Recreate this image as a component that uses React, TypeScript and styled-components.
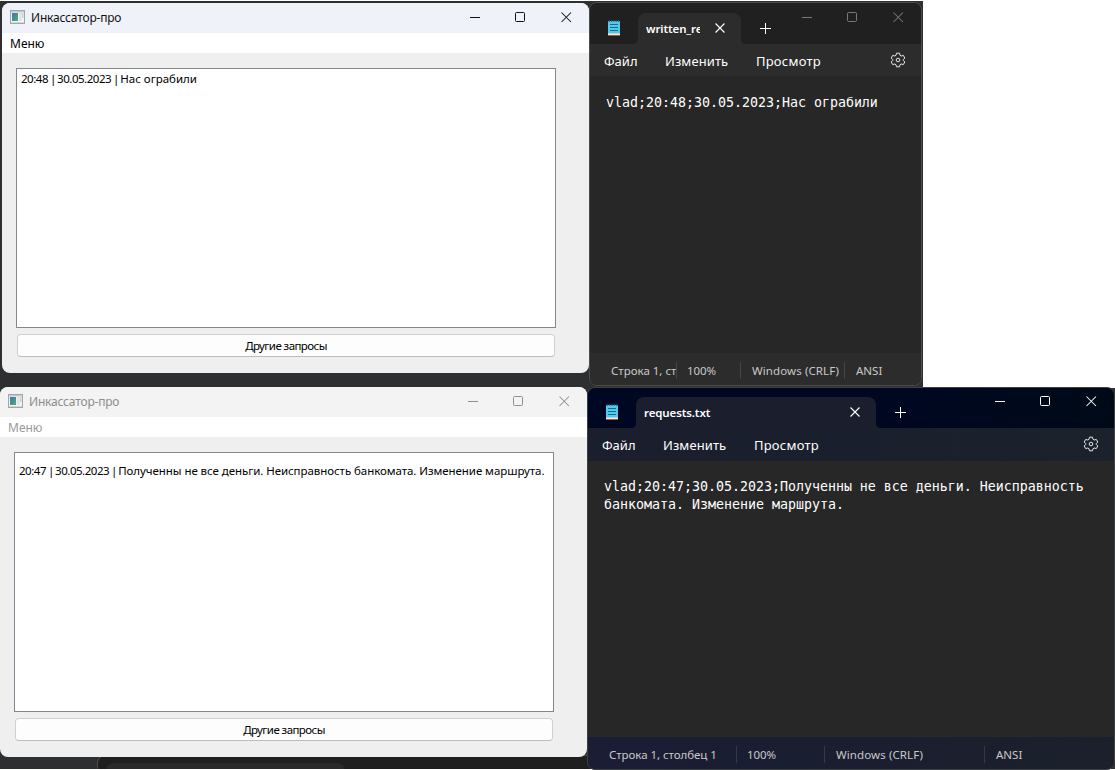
import React from "react";
import styled, { createGlobalStyle, css } from "styled-components";

const Global = createGlobalStyle`
  *, *::before, *::after { box-sizing: border-box; }
  html, body { margin: 0; background: #fff; }
  body { font-family: "Noto Sans", "Open Sans", sans-serif; font-size: 12px; overflow: hidden; }
`;

const Screen = styled.main`
  position: relative;
  width: 1115px;
  height: 770px;
  overflow: hidden;
  background: #fff;
`;

const Backdrop = styled.div<{ $x: number; $y: number; $w: number; $h: number }>`
  position: absolute;
  left: ${(p) => p.$x}px;
  top: ${(p) => p.$y}px;
  width: ${(p) => p.$w}px;
  height: ${(p) => p.$h}px;
  background: #2d2f30;
`;

const Label = styled.span<{ $ls?: number; $size?: number }>`
  display: inline-block;
  white-space: pre;
  letter-spacing: ${(p) => p.$ls ?? 0}px;
  ${(p) => p.$size && css`font-size: ${p.$size}px;`}
`;

/* ---------- request list window ---------- */

const FormWindow = styled.section<{ $x: number; $y: number }>`
  position: absolute;
  left: ${(p) => p.$x}px;
  top: ${(p) => p.$y}px;
  width: 587px;
  height: 370px;
  display: flex;
  flex-direction: column;
  border-radius: 8px;
  overflow: hidden;
  background: #efefef;
  color: #000;
`;

const FormTitle = styled.header<{ $active: boolean }>`
  flex: 0 0 30px;
  display: flex;
  align-items: center;
  padding: 0 17px 2px 8px;
  background: ${(p) => (p.$active ? "#f0f2f9" : "#f3f3f3")};
  color: ${(p) => (p.$active ? "#111" : "#8c8c8c")};
  svg { display: block; }
`;

const TitleText = styled.div`
  flex: 1;
  padding: 1px 0 0 6px;
  line-height: 16px;
`;

const Controls = styled.div`
  display: flex;
  gap: 35px;
`;

const MenuBar = styled.nav<{ $active: boolean }>`
  flex: 0 0 20px;
  min-height: 0;
  padding-left: 8px;
  line-height: 21px;
  background: #fff;
  color: ${(p) => (p.$active ? "#000" : "#9a9a9a")};
`;

const FormBody = styled.div`
  flex: 1;
  display: flex;
  flex-direction: column;
  padding: 15px 33px 16px 14px;
`;

const ListBox = styled.div<{ $pad: number }>`
  height: 260px;
  border: 1px solid #828790;
  background: #fff;
  padding: ${(p) => p.$pad}px 0 0 4px;
  font-size: 11.5px;
  line-height: 16px;
  overflow: hidden;
`;

const Entry = styled.div`
  display: flex;
  white-space: pre;
`;

const PushButton = styled.button`
  height: 23px;
  margin: 6px 1px 0;
  padding: 0;
  border: 1px solid #d0d0d0;
  border-bottom-color: #bcbcbc;
  border-radius: 4px;
  background: #fdfdfd;
  color: #000;
  font: inherit;
  line-height: 21px;
  text-align: center;
`;

const FormIcon = () => (
  <svg width="15" height="14" viewBox="0 0 15 14">
    <defs>
      <linearGradient id="pane" x1="0" y1="0" x2="1" y2="1">
        <stop offset="0" stopColor="#3f74a8" />
        <stop offset="1" stopColor="#4fae7c" />
      </linearGradient>
    </defs>
    <rect x="0.5" y="0.5" width="14" height="13" fill="#f2f3f4" stroke="#a2a6aa" />
    <rect x="1" y="1" width="13" height="1.5" fill="#c5c9cc" />
    <rect x="2" y="3" width="6" height="8" fill="url(#pane)" />
    <rect x="9" y="3" width="2.5" height="8" fill="#dfe3e5" />
    <rect x="12" y="3" width="1.5" height="5" fill="#b9dcc9" />
    <rect x="1" y="12" width="13" height="1" fill="#d5d7d9" />
  </svg>
);

const WindowControls = ({ color }: { color: string }) => (
  <Controls>
    <svg width="11" height="11" viewBox="0 0 11 11">
      <path d="M1 5.5H11" stroke={color} />
    </svg>
    <svg width="11" height="11" viewBox="0 0 11 11">
      <rect x="0.5" y="0.5" width="9" height="9" rx="1" fill="none" stroke={color} />
    </svg>
    <svg width="11" height="11" viewBox="0 0 11 11">
      <path d="M0.5 0.5L10 10M10 0.5L0.5 10" stroke={color} strokeWidth="1.05" />
    </svg>
  </Controls>
);

type FormProps = { x: number; y: number; active: boolean; pad: number; time: string; date: string; ls: number; text: string };

const RequestForm = ({ x, y, active, pad, time, date, ls, text }: FormProps) => (
  <FormWindow $x={x} $y={y}>
    <FormTitle $active={active}>
      <FormIcon />
      <TitleText><Label $ls={-0.19}>Инкассатор-про</Label></TitleText>
      <WindowControls color={active ? "#111" : "#8f8f8f"} />
    </FormTitle>
    <MenuBar $active={active}><Label>Меню</Label></MenuBar>
    <FormBody>
      <ListBox $pad={pad}>
        <Entry>
          <Label $ls={-0.47}>{time}</Label>
          <Label $ls={-1.1}>{" | "}</Label>
          <Label $ls={-0.47}>{date}</Label>
          <Label $ls={-1.1}>{" | "}</Label>
          <Label $ls={ls}>{text}</Label>
        </Entry>
      </ListBox>
      <PushButton><Label $size={11.5} $ls={-0.57}>Другие запросы</Label></PushButton>
    </FormBody>
  </FormWindow>
);

/* ---------- notepad window ---------- */

type Palette = { strip: string; bar: string; status: string; border: string; controls: string };

const grey: Palette = { strip: "#202020", bar: "#2c2c2c", status: "#2c2c2c", border: "#4b4d4c", controls: "#777" };
const navy: Palette = {
  strip: "linear-gradient(90deg, #000722, #000721 60%, #000a17)",
  bar: "linear-gradient(90deg, #1a1e2d, #1a1f2d 50%, #1b222b)",
  status: "linear-gradient(90deg, #1a1d34, #1a1e30 50%, #1b202b)",
  border: "#3d4043",
  controls: "#fff",
};

const PadWindow = styled.section<{ $x: number; $y: number; $w: number; $h: number; $c: string }>`
  position: absolute;
  left: ${(p) => p.$x}px;
  top: ${(p) => p.$y}px;
  width: ${(p) => p.$w}px;
  height: ${(p) => p.$h}px;
  display: flex;
  flex-direction: column;
  border: 1px solid ${(p) => p.$c};
  border-radius: 8px;
  overflow: hidden;
  background: #272727;
  color: #fff;
`;

const TabStrip = styled.header<{ $bg: string; $h: number }>`
  flex: 0 0 ${(p) => p.$h}px;
  display: flex;
  padding-left: 18px;
  background: ${(p) => p.$bg};
  svg { display: block; }
`;

const AppIcon = styled.div`
  width: 30px;
  align-self: flex-end;
  padding-bottom: 7px;
`;

const Tab = styled.div<{ $w: number; $bg: string }>`
  position: relative;
  width: ${(p) => p.$w}px;
  height: 31px;
  align-self: flex-end;
  padding: 0 16px 0 8px;
  display: flex;
  align-items: center;
  border-radius: 8px 8px 0 0;
  background: ${(p) => p.$bg};
  font-weight: 600;
  font-size: 11.5px;
  svg { margin-bottom: 1px; }

  &::before, &::after {
    content: "";
    position: absolute;
    bottom: 0;
    width: 4px;
    height: 4px;
  }
  &::before {
    right: 100%;
    background: radial-gradient(circle at 0 0, transparent 3.5px, ${(p) => p.$bg} 4px);
  }
  &::after {
    left: 100%;
    background: radial-gradient(circle at 100% 0, transparent 3.5px, ${(p) => p.$bg} 4px);
  }
`;

const TabName = styled.div<{ $w: number }>`
  width: ${(p) => p.$w}px;
  overflow: hidden;
  line-height: 18px;
  margin-right: auto;
  height: 18px;
`;

const NewTab = styled.div`
  align-self: flex-end;
  padding: 0 0 10px 19px;
  flex: 1;
`;

const StripControls = styled.div<{ $top: number }>`
  padding: ${(p) => p.$top}px 17px 0 0;
`;

const PadMenu = styled.nav<{ $h: number; $bg: string }>`
  flex: 0 0 ${(p) => p.$h}px;
  min-height: 0;
  display: flex;
  align-items: flex-start;
  padding: 0 15px 0 14px;
  background: ${(p) => p.$bg};
  font-size: 13px;
  line-height: 35px;
  svg { display: block; margin: 8px 0 0 auto; }
`;

const MenuItem = styled.span<{ $w: number }>`
  width: ${(p) => p.$w}px;
  height: 32px;
`;

const TextArea = styled.div<{ $top: number }>`
  flex: 1;
  padding: ${(p) => p.$top}px 0 0 16px;
  font-family: "DejaVu Sans Mono", monospace;
  font-size: 13.29px;
  line-height: 18px;
  white-space: pre;
`;

const StatusBar = styled.footer<{ $bg: string }>`
  flex: 0 0 32px;
  display: flex;
  align-items: center;
  padding: 2px 0 0 21px;
  background: ${(p) => p.$bg};
  color: #c9c9c9;
  font-size: 11.5px;
  line-height: 18px;
`;

const StatusCell = styled.div<{ $w: number; $gap: number }>`
  width: ${(p) => p.$w}px;
  height: 17px;
  line-height: 18px;
  overflow: hidden;
  padding-left: ${(p) => p.$gap}px;
  & + & { border-left: 1px solid rgba(255, 255, 255, 0.12); }
`;

const NotepadIcon = () => (
  <svg width="13" height="17" viewBox="0 0 13 17">
    <rect x="0" y="1" width="12" height="14" rx="0.8" fill="#55c8ea" />
    <path d="M0 13.5H12V15H0Z" fill="#e9eef0" />
    <path d="M0 15H12V15.3Q12 16 11.2 16H0.8Q0 16 0 15.3Z" fill="#b4571c" />
    <path d="M1.5 0.3V2M3.7 0.3V2M6 0.3V2M8.3 0.3V2M10.5 0.3V2" stroke="#176f8e" strokeWidth="1.1" />
    <path d="M2 4.5H10M2 7.5H10M2 10.5H10" stroke="#12708f" strokeWidth="1" />
  </svg>
);

const Gear = () => (
  <svg width="16" height="16" viewBox="0 0 16 16" fill="none" stroke="#e8e8e8" strokeLinejoin="round">
    <path d="M6.5 1.2H9.5L10 3.3L11.2 4L13.3 3.4L14.8 6L13.3 7.5V8.5L14.8 10L13.3 12.6L11.2 12L10 12.7L9.5 14.8H6.5L6 12.7L4.8 12L2.7 12.6L1.2 10L2.7 8.5V7.5L1.2 6L2.7 3.4L4.8 4L6 3.3Z" />
    <circle cx="8" cy="8" r="1.8" />
  </svg>
);

type Cell = { t: string; w: number; gap: number; ls?: number };

type PadProps = {
  x: number; y: number; w: number; h: number; palette: Palette; tab: string; tabW: number; nameW: number; tabBg: string;
  stripH: number; menuH: number; textTop: number; lines: string[]; cells: Cell[];
};

const Notepad = (p: PadProps) => (
  <PadWindow $x={p.x} $y={p.y} $w={p.w} $h={p.h} $c={p.palette.border}>
    <TabStrip $bg={p.palette.strip} $h={p.stripH}>
      <AppIcon><NotepadIcon /></AppIcon>
      <Tab $w={p.tabW} $bg={p.tabBg}>
        <TabName $w={p.nameW}><Label $ls={-0.12}>{p.tab}</Label></TabName>
        <svg width="10" height="10" viewBox="0 0 10 10"><path d="M0.5 0.5L9.5 9.5M9.5 0.5L0.5 9.5" stroke="#fff" strokeWidth="1.1" /></svg>
      </Tab>
      <NewTab>
        <svg width="11" height="11" viewBox="0 0 11 11"><path d="M0 5.5H11M5.5 0V11" stroke="#fff" /></svg>
      </NewTab>
      <StripControls $top={p.stripH - 32}><WindowControls color={p.palette.controls} /></StripControls>
    </TabStrip>
    <PadMenu $h={p.menuH} $bg={p.palette.bar}>
      <MenuItem $w={61}><Label>Файл</Label></MenuItem>
      <MenuItem $w={91}><Label $ls={0.1}>Изменить</Label></MenuItem>
      <MenuItem $w={70}><Label $ls={0.22}>Просмотр</Label></MenuItem>
      <Gear />
    </PadMenu>
    <TextArea $top={p.textTop}>{p.lines.map((l) => <div key={l}><Label>{l}</Label></div>)}</TextArea>
    <StatusBar $bg={p.palette.status}>
      {p.cells.map((c) => <StatusCell key={c.t} $w={c.w} $gap={c.gap}><Label $ls={c.ls}>{c.t}</Label></StatusCell>)}
    </StatusBar>
  </PadWindow>
);

const TaskWindow = styled.div`
  position: absolute;
  left: 97px;
  top: 755px;
  width: 500px;
  height: 14px;
  overflow: hidden;
  border: 1px solid #4a4a4a;
  border-bottom: 0;
  border-radius: 8px 8px 0 0;
  background: #1f1f1f;
  padding: 7px 0 0 8px;
`;

const TaskTab = styled.div`
  width: 239px;
  height: 24px;
  border-radius: 8px 8px 0 0;
  background: #2a2a2a;
`;

export default function App() {
  return (
    <>
      <Global />
      <Screen>
        <Backdrop $x={0} $y={1} $w={923} $h={387} />
        <Backdrop $x={0} $y={388} $w={1115} $h={381} />
        <TaskWindow><TaskTab /></TaskWindow>
        <RequestForm x={2} y={3} active pad={2} time="20:48" date="30.05.2023" ls={0} text="Нас ограбили" />
        <RequestForm x={0} y={387} active={false} pad={10} time="20:47" date="30.05.2023" ls={-0.06}
          text="Полученны не все деньги. Неисправность банкомата. Изменение маршрута." />
        <Notepad x={589} y={2} w={333} h={384} palette={grey} tab="written_requests.txt" tabW={103} nameW={54} tabBg="#2c2c2c"
          stripH={41} menuH={32} textTop={18} lines={["vlad;20:48;30.05.2023;Нас ограбили"]}
          cells={[{ t: "Строка 1, столбец 1", w: 65, gap: 0 }, { t: "100%", w: 64, gap: 10, ls: -0.1 }, { t: "Windows (CRLF)", w: 104, gap: 11, ls: 0.1 }, { t: "ANSI", w: 60, gap: 11 }]} />
        <Notepad x={587} y={387} w={528} h={383} palette={navy} tab="requests.txt" tabW={240} nameW={150} tabBg="#1a1e2d"
          stripH={40} menuH={33} textTop={17} lines={["vlad;20:47;30.05.2023;Полученны не все деньги. Неисправность", "банкомата. Изменение маршрута."]}
          cells={[{ t: "Строка 1, столбец 1", w: 127, gap: 0, ls: -0.05 }, { t: "100%", w: 88, gap: 10, ls: -0.1 }, { t: "Windows (CRLF)", w: 160, gap: 11, ls: 0.1 }, { t: "ANSI", w: 60, gap: 11 }]} />
      </Screen>
    </>
  );
}
